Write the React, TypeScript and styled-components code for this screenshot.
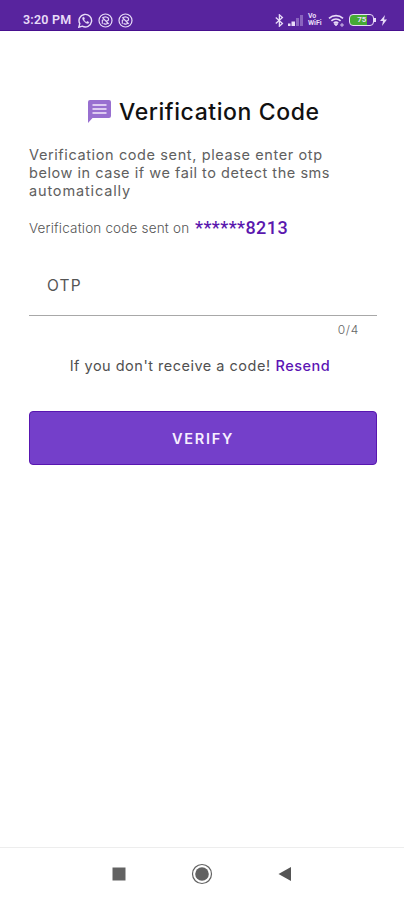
import React from "react";
import styled, { createGlobalStyle } from "styled-components";

const Global = createGlobalStyle`
  * { box-sizing: border-box; }
  body { margin: 0; background: #fff; }
`;

const Screen = styled.div`
  width: 404px;
  height: 900px;
  display: flex;
  flex-direction: column;
  overflow: hidden;
  background: #fff;
  font-family: Inter, "Open Sans", sans-serif;
  color: #505050;
`;

const StatusBar = styled.header`
  height: 31px;
  flex: none;
  display: flex;
  justify-content: space-between;
  padding: 12px 17px 0 23px;
  background: #58249e;
  border-bottom: 1px solid #48108f;
  color: #e8dcf8;
`;

const StatusGroup = styled.div<{ $gap: number }>`
  display: flex;
  align-items: center;
  height: 16px;
  gap: ${(p) => p.$gap}px;
  svg { display: block; flex: none; }
`;

const Clock = styled.span`
  width: 50px;
  font: 600 12.5px/16px Roboto, sans-serif;
  letter-spacing: 0.2px;
  white-space: nowrap;
`;

const Content = styled.main`
  flex: 1;
  display: flex;
  flex-direction: column;
  padding: 64px 27px 0 29px;
`;

const TitleRow = styled.div`
  height: 34px;
  display: flex;
  align-items: center;
  padding-left: 59px;
  gap: 8px;
  svg { flex: none; margin-top: -2px; }
`;

const Title = styled.h1`
  margin: 0;
  font-size: 23px;
  line-height: 34px;
  font-weight: 500;
  letter-spacing: 0.58px;
  color: #111;
  white-space: nowrap;
`;

const Message = styled.p`
  margin: 17px 0 0;
  font-size: 14.5px;
  line-height: 18px;
  color: #606060;
  white-space: nowrap;
`;

const Line = styled.span<{ $spacing: number }>`
  display: block;
  letter-spacing: ${(p) => p.$spacing}px;
`;

const Recipient = styled.div`
  display: flex;
  align-items: center;
  height: 24px;
  margin-top: 16px;
  white-space: nowrap;
`;

const SentOn = styled.span`
  width: 166px;
  font-size: 13.5px;
  font-weight: 300;
  letter-spacing: 0.17px;
  color: #555;
`;

const Phone = styled.span`
  font: 500 18px/24px Roboto, sans-serif;
  letter-spacing: 0.43px;
  color: #5a17ae;
`;

const Field = styled.label`
  height: 76px;
  padding: 36px 18px 0;
  border-bottom: 1px solid #a8a8a8;
  font-size: 15.5px;
  line-height: 20px;
  letter-spacing: 1.2px;
  color: #555;
`;

const Counter = styled.div`
  padding: 6px 18px 0 0;
  text-align: right;
  font-size: 12px;
  line-height: 16px;
  letter-spacing: 0.7px;
  font-weight: 300;
  color: #666;
`;

const ResendRow = styled.div`
  display: flex;
  justify-content: center;
  gap: 5px;
  margin-top: 18px;
  padding-right: 6px;
  font-size: 14.5px;
  line-height: 20px;
  letter-spacing: 0.5px;
  white-space: nowrap;
`;

const Resend = styled.a`
  color: #5b14b4;
  font-weight: 500;
`;

const VerifyButton = styled.button`
  height: 54px;
  margin-top: 35px;
  padding: 1px 0 0;
  border: 1px solid #5816b0;
  border-radius: 4px;
  background: #743fca;
  color: #f7efff;
  font: 600 14.5px/20px Inter, sans-serif;
  letter-spacing: 1.7px;
`;

const NavBar = styled.nav`
  height: 53px;
  flex: none;
  display: grid;
  grid-template-columns: 16px 22px 16px;
  justify-content: center;
  column-gap: 64px;
  align-items: center;
  border-top: 1px solid #ededed;
  svg { display: block; margin: auto; }
`;

const WhatsApp = () => (
  <svg width="15" height="15" viewBox="0 0 15 15" fill="none" stroke="currentColor">
    <path d="M.8 14.2 1.8 10.7a6.3 6.3 0 1 1 2.5 2.5Z" strokeWidth="1.4" />
    <path d="M5 4.2c-.9.7-.6 2 .8 3.9 1.6 2 3.5 3 4.7 2.1l.5-.9-1.8-1-.8.9C7.2 8.7 6.3 7.7 6 6.6l.7-.7-.7-1.7Z" fill="currentColor" strokeWidth=".4" />
  </svg>
);

const AppBadge = () => (
  <svg width="15" height="15" viewBox="0 0 15 15" fill="none" stroke="currentColor">
    <circle cx="7.5" cy="7.5" r="6.5" strokeWidth="1.2" />
    <path d="M4.3 5.2c2-2.2 6.5-1.5 6.3 1.2-.1 1.6-2 1.8-2.7 1.2M4.3 10.7V7.3c1.4-1 2.7-.3 3.6.8l2.3 2.4M4.3 4.3l6.5 6.5M5.5 10.5c1.2 1 3.5.7 4.5-.3" strokeWidth="1.1" />
  </svg>
);

const Bluetooth = () => (
  <svg width="9" height="13" viewBox="0 0 9 13" fill="none" stroke="currentColor" strokeWidth="1.3">
    <path d="m.8 3.5 6.6 6-3 2.7V.8l3 2.7-6.6 6" />
  </svg>
);

const Signal = () => (
  <svg width="15" height="12" viewBox="0 0 15 12" fill="currentColor">
    <path d="M0 9.5h2.500V12H0zM3.5 7.5H7V12H3.5z" />
    <path opacity=".35" d="M8 4h3v8H8zM12 1h3v11h-3z" />
  </svg>
);

const VoWifi = styled.span`
  display: flex;
  flex-direction: column;
  width: 15px;
  height: 14px;
  font: 700 7px/7px Roboto, sans-serif;
  white-space: nowrap;
`;

const Wifi = () => (
  <svg width="17" height="13" viewBox="0 0 17 13" fill="none" stroke="currentColor">
    <path d="M1 4.3c4-3.5 10-3.5 14 0M3.4 6.8c2.6-2.4 6.6-2.4 9.2 0M5.8 9.2c1.2-1.1 3.2-1.1 4.4 0" strokeWidth="1.7" />
    <path d="m6.3 9.8 1.7 2 1.7-2Z" fill="currentColor" />
    <path d="M12 11h4m-2-2v4" strokeWidth=".8" />
  </svg>
);

const Battery = styled.span`
  position: relative;
  width: 25px;
  height: 12px;
  margin-right: 1px;
  border: 1.5px solid currentColor;
  border-radius: 4px;
  background: linear-gradient(90deg, #46aa35 0 75%, #58249e 75%);
  font: 700 8px/10px Roboto, sans-serif;
  text-align: center;
  &::after {
    content: "";
    position: absolute;
    right: -3px;
    top: 3px;
    width: 2px;
    height: 4px;
    background: currentColor;
  }
`;

const Bolt = () => (
  <svg width="7" height="11" viewBox="0 0 7 11" fill="currentColor">
    <path d="M5 0 0 6h3L2 11l5-6.5H4Z" />
  </svg>
);

const MessageIcon = () => (
  <svg width="23" height="23" viewBox="0 0 23 23">
    <path d="M2 0h19q2 0 2 2v14q0 2-2 2H4.5L0 23V2Q0 0 2 0Z" fill="#986fd0" />
    <path d="M4.5 5h14M4.5 9h14M4.5 13h14" stroke="#f4eafb" strokeWidth="1.7" />
  </svg>
);

export default function App() {
  return (
    <Screen>
      <Global />
      <StatusBar>
        <StatusGroup $gap={5}>
          <Clock>3:20 PM</Clock>
          <WhatsApp />
          <AppBadge />
          <AppBadge />
        </StatusGroup>
        <StatusGroup $gap={4.7}>
          <Bluetooth />
          <Signal />
          <VoWifi><span>Vo</span><span>WiFi</span></VoWifi>
          <Wifi />
          <Battery>75</Battery>
          <Bolt />
        </StatusGroup>
      </StatusBar>
      <Content>
        <TitleRow>
          <MessageIcon />
          <Title>Verification Code</Title>
        </TitleRow>
        <Message>
          <Line $spacing={0.61}>Verification code sent, please enter otp</Line>
          <Line $spacing={0.54}>below in case if we fail to detect the sms</Line>
          <Line $spacing={0.85}>automatically</Line>
        </Message>
        <Recipient>
          <SentOn>Verification code sent on</SentOn>
          <Phone>******8213</Phone>
        </Recipient>
        <Field>OTP</Field>
        <Counter>0/4</Counter>
        <ResendRow>
          <span>If you don't receive a code!</span>
          <Resend>Resend</Resend>
        </ResendRow>
        <VerifyButton type="button">VERIFY</VerifyButton>
      </Content>
      <NavBar>
        <svg width="14" height="14" viewBox="0 0 14 14">
          <path d="M.5.5h13v13H.5z" fill="#626262" />
        </svg>
        <svg width="22" height="22" viewBox="0 0 22 22">
          <circle cx="11" cy="11" r="9.5" fill="none" stroke="#626262" strokeWidth="1.2" />
          <circle cx="11" cy="11" r="6.8" fill="#626262" />
        </svg>
        <svg width="14" height="16" viewBox="0 0 14 16">
          <path d="M.5 8 13 1v14Z" fill="#555" />
        </svg>
      </NavBar>
    </Screen>
  );
}
